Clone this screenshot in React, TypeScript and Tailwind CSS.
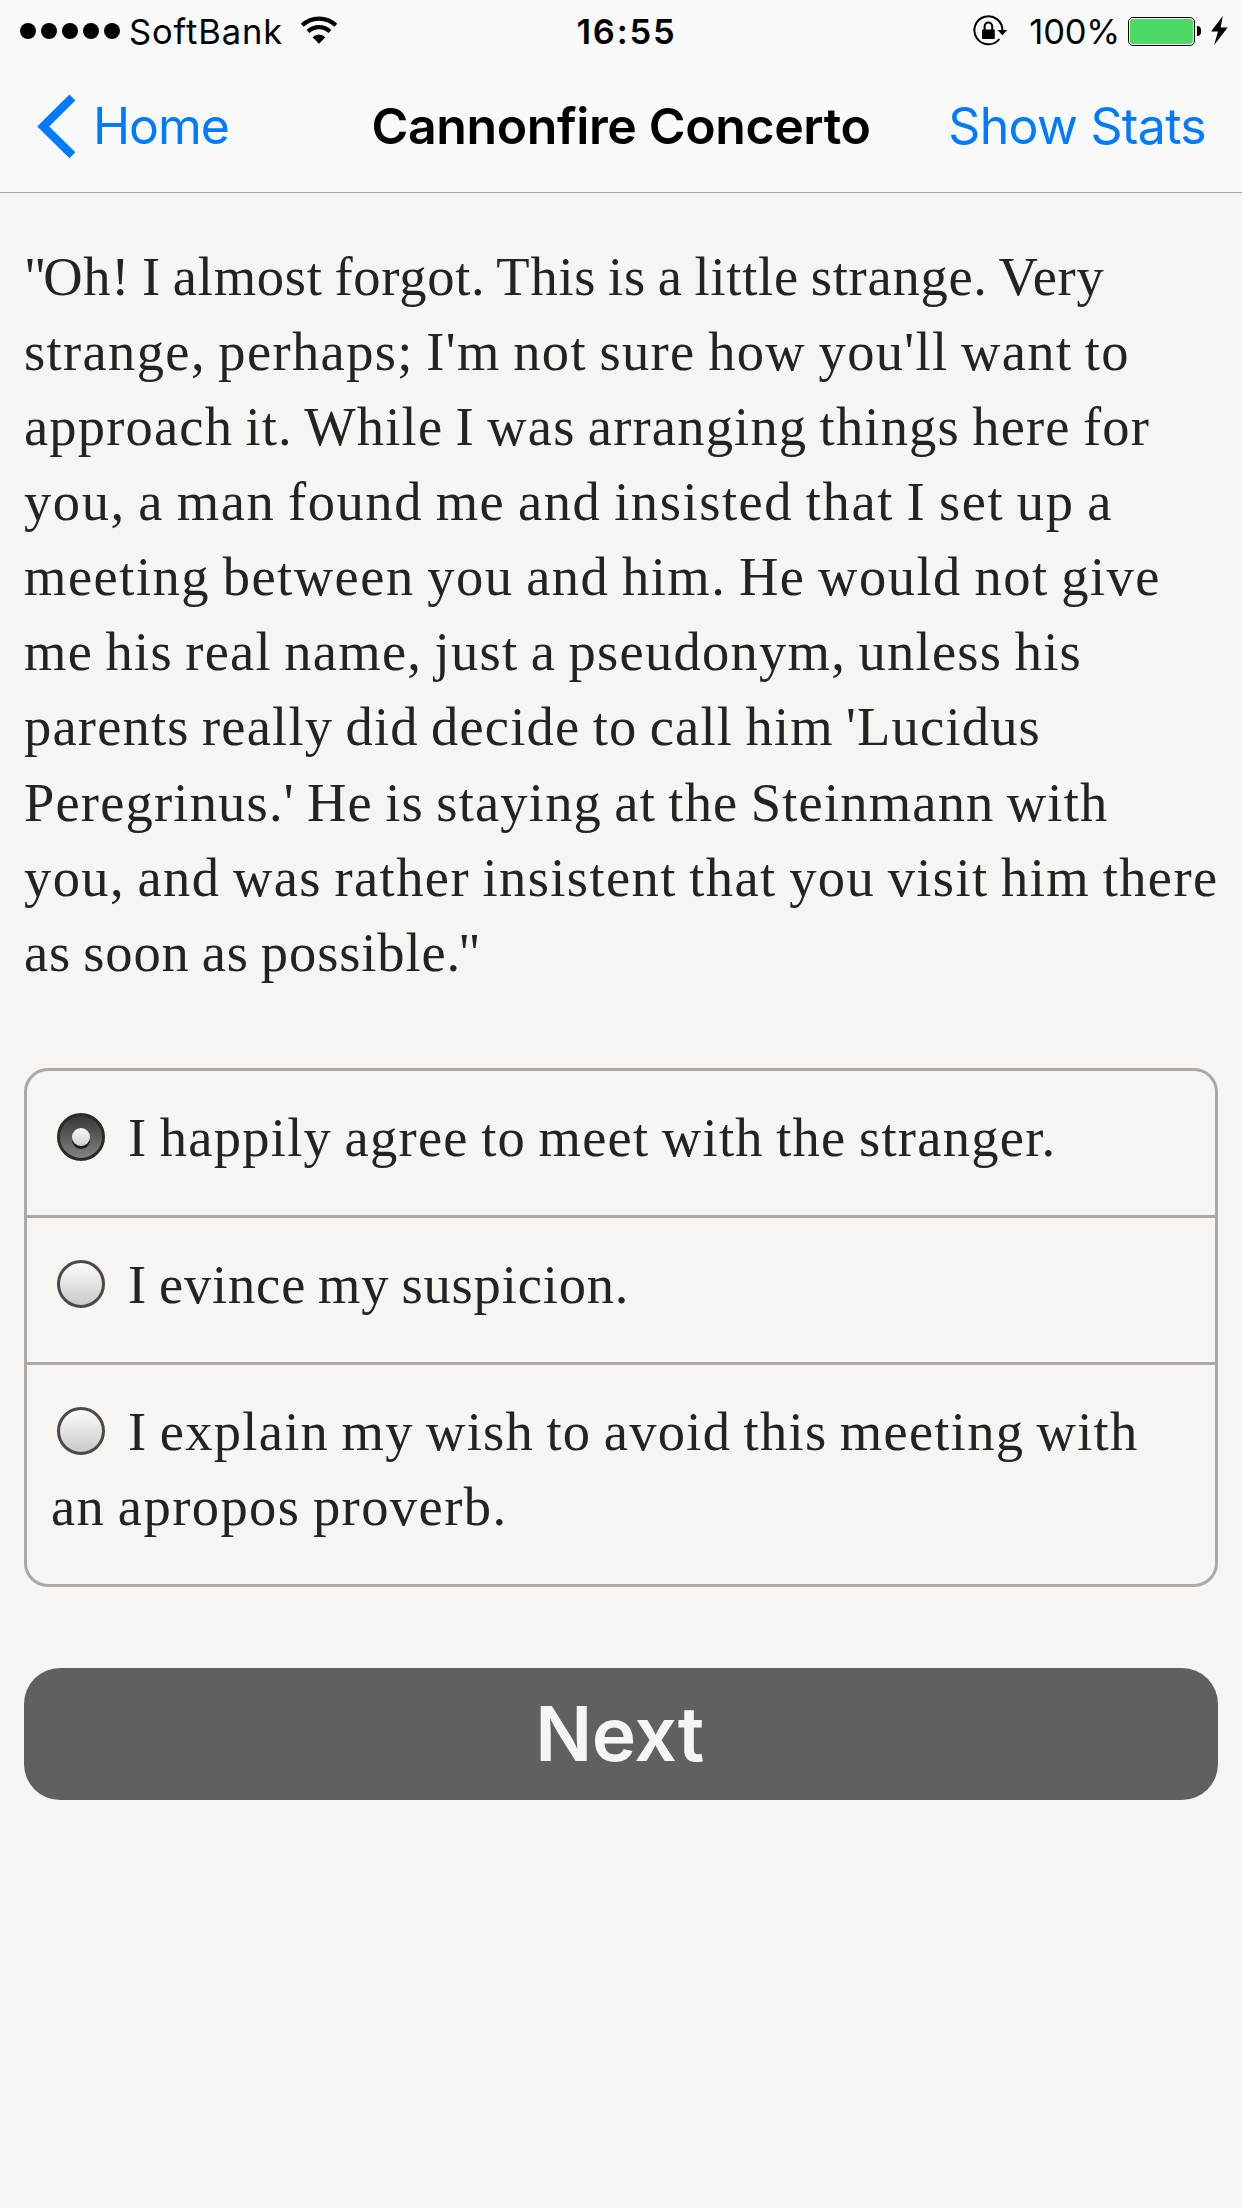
import type { ReactNode } from 'react';

const paragraph: { text: ReactNode; tracking: string }[] = [
  {
    text: (
      <>
        <span className="tracking-[-3px]">"</span>Oh! I almost forgot. This is a little strange. Very
      </>
    ),
    tracking: 'tracking-[0.74px]',
  },
  { text: "strange, perhaps; I'm not sure how you'll want to", tracking: 'tracking-[1.357px]' },
  { text: 'approach it. While I was arranging things here for', tracking: 'tracking-[1.18px]' },
  { text: 'you, a man found me and insisted that I set up a', tracking: 'tracking-[1.565px]' },
  { text: 'meeting between you and him. He would not give', tracking: 'tracking-[1.495px]' },
  { text: 'me his real name, just a pseudonym, unless his', tracking: 'tracking-[1.257px]' },
  { text: "parents really did decide to call him 'Lucidus", tracking: 'tracking-[1.187px]' },
  { text: "Peregrinus.' He is staying at the Steinmann with", tracking: 'tracking-[1.183px]' },
  { text: 'you, and was rather insistent that you visit him there', tracking: 'tracking-[1.404px]' },
  {
    text: (
      <>
        as soon as possible<span className="tracking-[-2px]">."</span>
      </>
    ),
    tracking: 'tracking-[0.885px]',
  },
];

const options: { lines: { text: string; tracking: string }[]; checked: boolean }[] = [
  { checked: true, lines: [{ text: 'I happily agree to meet with the stranger.', tracking: 'tracking-[1.264px]' }] },
  { checked: false, lines: [{ text: 'I evince my suspicion.', tracking: 'tracking-[0.835px]' }] },
  {
    checked: false,
    lines: [
      { text: 'I explain my wish to avoid this meeting with', tracking: 'tracking-[1.266px]' },
      { text: 'an apropos proverb.', tracking: 'tracking-[1.427px]' },
    ],
  },
];

function Radio({ checked }: { checked: boolean }) {
  return checked ? (
    <span className="relative ml-[6px] mr-[23px] inline-block size-[48px] rounded-full border-[3px] border-[#2c2a2b] bg-linear-to-b from-[#383637] to-[#858384] align-[-5px]">
      <span className="absolute left-[12px] top-[12px] size-[18px] rounded-full bg-linear-to-b from-[#fafafa] to-[#d0d0d0] shadow-[0_3px_0_#201e1f]" />
    </span>
  ) : (
    <span className="ml-[6px] mr-[23px] inline-block size-[48px] rounded-full border-[3px] border-[#4a4a4a] bg-linear-to-b from-[#fdfcfd] to-[#cbc9c9] align-[-5px]" />
  );
}

function Wifi() {
  return (
    <svg width="38" height="28" viewBox="0 0 38 28" className="ml-[17px] mt-[-4px] shrink-0" fill="none">
      <path d="M2.2 9.2A24.5 24.5 0 0 1 35.8 9.2" stroke="#000" strokeWidth="4.2" />
      <path d="M8 15.6A16 16 0 0 1 30 15.6" stroke="#000" strokeWidth="4.2" />
      <path d="M19 27.8L12.6 21.2A9.2 9.2 0 0 1 25.4 21.2Z" fill="#000" />
    </svg>
  );
}

function RotationLock() {
  return (
    <svg width="36" height="32" viewBox="0 0 36 32" className="mt-[-2px] shrink-0" fill="none">
      <path d="M29.4 16A14 14 0 1 0 26.4 24" stroke="#000" strokeWidth="2" />
      <path d="M24.5 15H34.2L29.4 20.3Z" fill="#000" />
      <rect x="9" y="14.6" width="12.8" height="9.4" rx="0.8" fill="#000" />
      <path d="M11.6 15V11.4A3.8 4 0 0 1 19.2 11.4V15" stroke="#000" strokeWidth="2" />
    </svg>
  );
}

function Battery() {
  return (
    <div className="ml-[8px] mt-[-1px] flex shrink-0 items-center">
      <div className="h-[29px] w-[67px] rounded-[5px] border border-black bg-white p-px">
        <div className="size-full rounded-[3px] bg-[#4cd964]" />
      </div>
      <div className="ml-[2px] h-[10px] w-[4px] rounded-r-full bg-black" />
      <svg width="17" height="29" viewBox="0 0 17 29" className="ml-[10px] mt-[-1px]">
        <path d="M11.8 0L0 15.4H7L3.2 29L16.6 11.4H9.6Z" fill="#000" />
      </svg>
    </div>
  );
}

export default function App() {
  return (
    <div className="h-[2208px] w-[1242px] overflow-hidden bg-[#f7f4f2]">
      <header className="h-[193px] border-b border-[#a9a5a5] bg-[#f9f9f9] font-['Inter',sans-serif] text-black">
        <div className="grid h-[63px] grid-cols-[1fr_auto_1fr] items-center text-[34.5px] leading-[63px]">
          <div className="flex items-center pl-[20px]">
            <div className="mt-[-2px] flex gap-[5px]">
              {[0, 1, 2, 3, 4].map((n) => (
                <span key={n} className="size-[16px] rounded-full bg-black" />
              ))}
            </div>
            <span className="ml-[9px] tracking-[0.9px]">SoftBank</span>
            <Wifi />
          </div>
          <div className="pl-[11px] font-semibold tracking-[1.8px]">16:55</div>
          <div className="flex items-center justify-end pr-[14px]">
            <RotationLock />
            <span className="ml-[20px] tracking-[-0.2px]">100%</span>
            <Battery />
          </div>
        </div>
        <div className="grid h-[126px] grid-cols-[1fr_auto_1fr] items-center text-[50px] leading-[126px]">
          <div className="flex items-center pl-[36px] text-[#007aff]">
            <svg width="42" height="66" viewBox="0 0 42 66" className="shrink-0" fill="none">
              <path d="M36.4 4.4L7.2 33.4L36.4 62.2" stroke="#007aff" strokeWidth="8.4" />
            </svg>
            <span className="ml-[15px] tracking-[-1.1px]">Home</span>
          </div>
          <div className="font-semibold tracking-[-0.39px]">Cannonfire Concerto</div>
          <div className="pr-[36px] text-right tracking-[-0.7px] text-[#007aff]">Show Stats</div>
        </div>
      </header>

      <main className="px-[24px] pt-[45.5px] font-['Liberation_Serif',serif] text-[54.5px] leading-[75.15px] text-[#242222] [word-spacing:-2.5px]">
        <p>
          {paragraph.map((line, i) => (
            <span key={i} className={`block whitespace-nowrap ${line.tracking}`}>
              {line.text}
            </span>
          ))}
        </p>

        <div className="mt-[78px] divide-y-[3px] divide-[#a8a9ab] rounded-[24px] border-[3px] border-[#a8a9ab] leading-[75px]">
          {options.map((option, i) => (
            <label key={i} className="block whitespace-nowrap pb-[40px] pl-[24px] pt-[29px]">
              {option.lines.map((line, j) => (
                <span key={j} className="block h-[75px]">
                  {j === 0 && <Radio checked={option.checked} />}
                  <span className={line.tracking}>{line.text}</span>
                </span>
              ))}
            </label>
          ))}
        </div>

        <button className="mt-[81px] flex h-[132px] w-full items-center justify-center rounded-[36px] bg-[#62605e] pb-[2px] pr-[3px] font-['Inter',sans-serif] text-[75px] font-semibold leading-none tracking-[-0.4px] text-[#f7f4f2]">
          Next
        </button>
      </main>
    </div>
  );
}
